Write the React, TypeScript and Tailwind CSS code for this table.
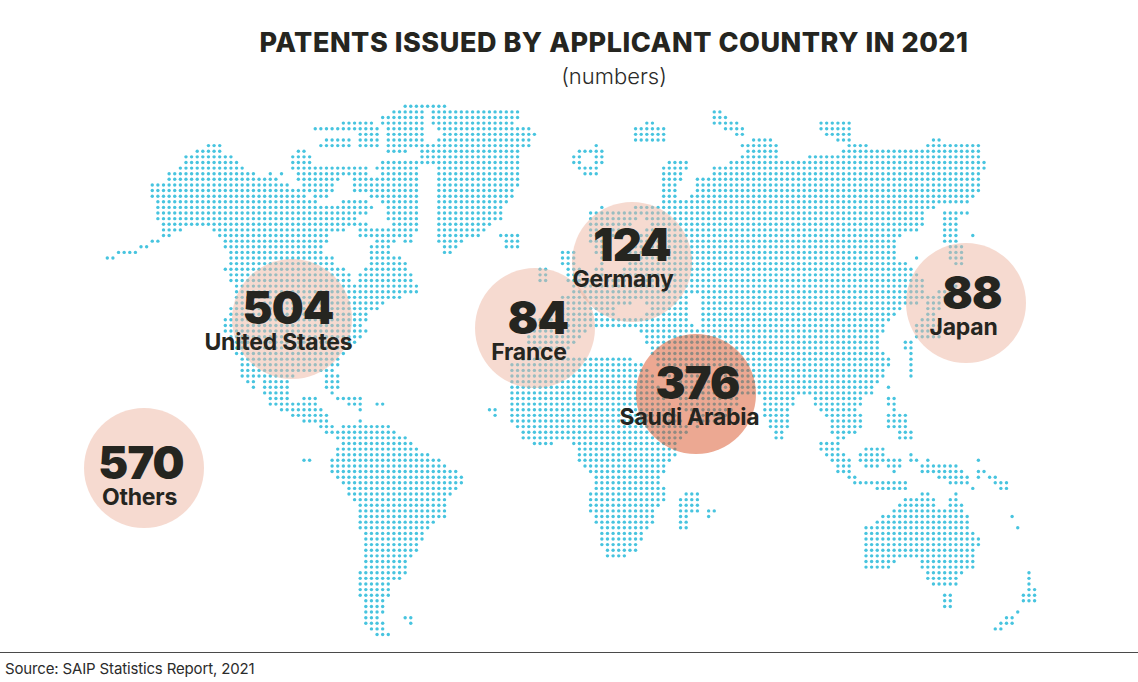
import React from 'react';

type P = [number, number][];

const PITCH = 5.62;
const X0 = 107.3;
const Y0 = 258;

const NA: P = [[150,183],[160,183],[166,178],[170,172],[182,165],[183,155],[200,150],[211,144],[222,144],[223,152],[234,155],[240,164],[250,171],[262,176],[279,178],[289,184],[299,189],[305,195],[311,200],[334,206],[348,211],[355,217],[355,226],[345,231],[332,233],[332,244],[325,246],[325,253],[333,256],[336,262],[342,268],[350,274],[352,283],[356,283],[357,272],[366,268],[366,250],[372,245],[372,240],[365,237],[357,235],[357,222],[368,222],[371,228],[392,227],[401,233],[402,240],[395,242],[390,246],[390,255],[398,254],[405,261],[410,268],[414,278],[418,287],[417,295],[400,298],[386,302],[380,308],[370,313],[366,320],[364,326],[369,331],[360,337],[356,342],[350,347],[349,353],[343,358],[339,364],[337,370],[339,376],[340,385],[337,393],[335,398],[330,397],[327,390],[325,383],[323,375],[295,374],[292,380],[290,388],[289,398],[298,404],[305,397],[316,395],[318,405],[323,410],[327,415],[328,422],[333,427],[336,433],[328,434],[320,429],[315,424],[302,422],[291,417],[280,412],[270,406],[266,399],[262,392],[262,381],[257,376],[254,376],[256,388],[251,390],[246,382],[240,376],[239,358],[234,353],[234,342],[227,336],[223,330],[223,318],[228,312],[229,306],[234,302],[234,290],[231,284],[228,278],[223,270],[226,262],[226,250],[221,245],[221,238],[216,234],[211,230],[204,226],[196,227],[185,228],[181,233],[167,234],[161,229],[161,222],[157,218],[155,213],[155,200],[149,195]];

const ELL: P = [[380,118],[392,111],[406,104],[423,104],[423,150],[412,150],[402,155],[387,155],[384,142],[383,128]];
const BAF: P = [[378,160],[392,157],[404,158],[418,162],[420,175],[421,190],[418,200],[417,215],[416,242],[405,244],[397,237],[390,230],[388,220],[386,206],[376,197],[363,195],[355,192],[350,186],[348,180],[362,178],[378,176],[376,168]];
const SOU: P = [[340,199],[367,199],[374,207],[370,214],[362,215],[345,212],[338,206]];
const MEL: P = [[311,127],[339,127],[339,134],[311,134]];
const MEL2: P = [[326,135],[350,137],[353,150],[326,151],[316,147]];
const DEV: P = [[359,121],[373,121],[380,130],[379,150],[357,150],[355,143]];
const SM1: P = [[341,121],[355,121],[355,131],[341,131]];
const BANKS: P = [[299,149],[309,150],[313,158],[313,166],[335,165],[366,166],[368,172],[364,178],[344,178],[334,182],[332,196],[316,197],[306,195],[301,185],[295,178],[290,167],[291,157]];
const GRL: P = [[425,105],[445,105],[452,110],[487,109],[518,109],[521,117],[516,123],[528,127],[535,135],[530,145],[523,150],[523,167],[518,174],[518,186],[513,191],[513,198],[506,203],[503,210],[503,219],[490,224],[483,231],[478,238],[466,237],[462,245],[456,250],[454,257],[446,257],[441,246],[435,236],[435,190],[439,176],[434,168],[421,166],[417,153],[421,145],[438,141],[440,133],[434,126]];
const ICE: P = [[500,233],[523,233],[523,249],[504,250]];
const SVAL: P = [[575,147],[600,145],[606,158],[600,172],[590,177],[578,172],[572,160]];
const FJL: P = [[630,132],[646,121],[669,127],[663,145],[630,145]];
const NZEM: P = [[712,110],[721,112],[735,120],[745,128],[745,138],[736,138],[724,128],[712,122]];
const SEVZ: P = [[820,122],[852,122],[852,143],[838,143],[828,137],[820,130]];

const EUR: P = [[529,350],[527,335],[529,321],[540,318],[549,318],[552,308],[558,298],[566,293],[578,291],[588,284],[593,276],[596,268],[598,258],[592,250],[588,238],[586,224],[590,211],[600,206],[612,210],[628,210],[640,205],[660,204],[662,190],[662,172],[666,160],[690,158],[692,167],[681,171],[680,200],[689,199],[694,188],[696,178],[710,176],[715,169],[716,161],[725,166],[732,160],[744,153],[739,146],[748,140],[772,139],[779,147],[779,160],[786,160],[806,160],[812,155],[823,155],[843,150],[848,145],[866,145],[869,150],[905,150],[920,150],[926,144],[931,139],[940,139],[958,145],[972,143],[981,146],[981,155],[985,162],[987,169],[981,176],[981,192],[974,198],[969,204],[934,207],[926,214],[923,222],[929,226],[917,232],[905,235],[897,240],[897,258],[908,261],[913,268],[918,273],[924,280],[924,291],[931,297],[918,303],[904,308],[897,313],[892,319],[885,324],[887,330],[880,336],[880,346],[887,352],[890,360],[888,368],[887,375],[883,381],[877,387],[873,393],[866,396],[862,400],[859,408],[863,415],[863,427],[857,432],[849,434],[846,440],[838,444],[834,440],[831,430],[831,422],[825,415],[818,410],[813,404],[810,396],[796,396],[794,406],[790,420],[786,432],[785,442],[779,443],[773,433],[767,422],[762,411],[759,397],[746,395],[733,393],[741,401],[736,410],[722,418],[707,425],[697,428],[690,421],[683,409],[675,396],[667,383],[660,371],[654,360],[650,352],[647,343],[642,332],[625,327],[605,326],[592,328],[582,335],[578,343],[568,349],[552,352]];

const AFR: P = [[507,366],[515,361],[528,357],[545,355],[562,355],[578,357],[592,356],[606,358],[624,358],[640,360],[648,366],[655,378],[662,391],[670,404],[678,416],[684,420],[692,426],[686,436],[680,442],[675,447],[678,453],[673,460],[668,468],[662,474],[662,482],[668,486],[668,503],[655,508],[652,514],[656,519],[650,526],[644,531],[642,540],[639,548],[634,553],[624,559],[602,560],[602,548],[597,540],[597,525],[591,520],[591,512],[586,507],[586,496],[591,490],[591,475],[586,470],[579,463],[574,457],[579,452],[579,445],[570,443],[557,443],[540,445],[530,443],[520,437],[519,428],[514,424],[507,418],[507,386],[511,380],[507,372]];
const MAD: P = [[689,489],[699,489],[699,510],[692,515],[685,531],[675,531],[675,504]];
const UK: P = [[562,251],[572,248],[577,257],[581,270],[583,282],[573,287],[563,285],[565,272],[560,262]];
const IRE: P = [[535,266],[550,266],[550,283],[535,283]];

const SAK: P = [[941,209],[969,209],[969,216],[958,218],[958,243],[941,243]];
const HOK: P = [[946,245],[962,245],[962,267],[953,267],[946,256]];
const HON: P = [[950,283],[958,284],[958,290],[950,295],[942,301],[939,310],[934,318],[940,325],[942,338],[930,339],[916,339],[911,331],[918,322],[924,315],[926,305],[932,295],[942,288]];
const KYU: P = [[900,339],[912,339],[912,355],[900,352]];
const TAI: P = [[908,358],[915,358],[915,378],[908,378]];
const PHIL: P = [[886,398],[896,398],[900,412],[908,416],[913,440],[902,443],[895,432],[887,426],[889,410]];
const BOR: P = [[869,444],[885,444],[885,462],[878,471],[865,471],[857,462],[859,451]];
const SUM: P = [[819,439],[830,439],[846,455],[855,470],[851,478],[840,476],[830,462],[821,450]];
const JAVA: P = [[852,477],[885,478],[907,483],[907,490],[885,490],[852,485]];
const SUL: P = [[886,455],[902,455],[902,471],[892,473],[886,468]];
const NG: P = [[919,466],[945,461],[961,467],[969,474],[973,489],[962,485],[945,482],[931,474],[919,472]];
const AUS: P = [[864,528],[874,521],[880,516],[891,512],[891,506],[903,504],[903,495],[920,495],[921,489],[929,489],[935,497],[938,508],[947,510],[950,500],[953,492],[958,492],[962,503],[963,512],[969,518],[969,527],[974,531],[980,540],[980,549],[974,553],[974,570],[968,571],[962,577],[958,583],[951,588],[937,589],[932,583],[926,577],[920,570],[920,563],[914,559],[901,561],[889,563],[889,568],[873,571],[864,567]];
const TAS: P = [[940,594],[953,594],[953,611],[940,611]];
const NZN: P = [[1025,571],[1032,571],[1032,587],[1037,589],[1037,600],[1027,605],[1020,600],[1025,590]];
const NZS: P = [[1021,603],[1015,611],[1004,618],[993,626],[994,634],[1004,631],[1013,623],[1020,615],[1023,606]];

const SA: P = [[345,424],[365,423],[385,422],[393,426],[396,435],[410,439],[421,449],[437,459],[448,465],[461,471],[462,488],[454,493],[449,500],[449,515],[443,520],[433,525],[428,532],[421,545],[414,555],[408,562],[406,576],[395,581],[389,588],[389,600],[381,605],[388,610],[381,618],[384,625],[388,630],[394,637],[380,639],[367,632],[365,620],[365,605],[360,596],[357,586],[360,570],[362,555],[362,530],[357,525],[360,505],[347,496],[342,482],[330,471],[328,460],[336,450],[340,440],[330,436],[330,430]];
const CUBA: P = [[334,395],[346,394],[356,396],[366,401],[363,406],[345,404],[334,400]];

const LAND: P[] = [NA, ELL, BAF, SOU, MEL, MEL2, DEV, SM1, BANKS, GRL, ICE, SVAL, FJL, NZEM, SEVZ, EUR, AFR, MAD, UK, IRE, SAK, HOK, HON, KYU, TAI, PHIL, BOR, SUM, JAVA, SUL, NG, AUS, TAS, NZN, NZS, SA, CUBA];

const WATER: P[] = [
  [[584,155],[595,155],[595,166],[584,166]],
  [[578,343],[590,330],[625,329],[642,333],[647,345],[649,356],[630,357],[600,356],[585,352]],
  [[612,305],[640,302],[650,309],[642,318],[620,318]],
  [[688,293],[698,293],[703,313],[697,330],[689,320]],
  [[606,256],[612,242],[624,229],[640,218],[650,222],[638,236],[630,250],[627,265],[620,276],[606,276]],
  [[700,372],[713,367],[724,378],[720,386],[708,381]],
];

const EXTRA: [number, number][] = [
  [107,258],[113,258],[118,252],[124,252],[130,252],[135,252],[141,247],[147,247],[152,241],[158,241],[163,235],[169,235],
  [270,174],[280,174],
  [302,458],[308,458],[302,463],
  [403,619],[410,619],[410,625],
  [487,408],[493,408],[493,413],
  [375,403],[382,403],[358,408],[358,419],
  [710,513],[717,513],[710,519],
  [1012,519],[1017,525],
  [978,463],[978,469],[983,469],[978,475],[990,475],[995,475],[995,480],[1001,480],[1007,480],[1000,486],[1007,486],
  [893,480],[905,480],[912,452],[917,458],[928,458],[912,463],
  [890,386],[975,235],[917,258],
  [698,180],[698,186],[715,169],
];

function inside(x: number, y: number, poly: P) {
  let c = false;
  for (let i = 0, j = poly.length - 1; i < poly.length; j = i++) {
    const [xi, yi] = poly[i];
    const [xj, yj] = poly[j];
    if (yi > y !== yj > y && x < ((xj - xi) * (y - yi)) / (yj - yi) + xi) c = !c;
  }
  return c;
}

function buildDots() {
  const out: [number, number][] = [];
  const seen = new Set<string>();
  for (let j = -28; j <= 68; j++) {
    const y = Y0 + PITCH * j;
    for (let i = 0; i <= 166; i++) {
      const x = X0 + PITCH * i;
      if (LAND.some((p) => inside(x, y, p)) && !WATER.some((p) => inside(x, y, p))) {
        out.push([x, y]);
        seen.add(i + ',' + j);
      }
    }
  }
  for (const [ex, ey] of EXTRA) {
    const i = Math.round((ex - X0) / PITCH);
    const j = Math.round((ey - Y0) / PITCH);
    const k = i + ',' + j;
    if (!seen.has(k)) {
      seen.add(k);
      out.push([X0 + PITCH * i, Y0 + PITCH * j]);
    }
  }
  return out;
}

const DOTS = buildDots();

const MAP_TOP = 95;

// cx/cy: bubble centre; nx: number centre; ny: number cap top; lx: label centre
const BUBBLES = [
  { cx: 292, cy: 319, dark: false, num: '504', nx: 288, ny: 292, label: 'United States', lx: 278.5 },
  { cx: 143.5, cy: 468, dark: false, num: '570', nx: 141, ny: 447, label: 'Others', lx: 139.5 },
  { cx: 632, cy: 262, dark: false, num: '124', nx: 632, ny: 229, label: 'Germany', lx: 623 },
  { cx: 535, cy: 328, dark: false, num: '84', nx: 538, ny: 302, label: 'France', lx: 529 },
  { cx: 696, cy: 394, dark: true, num: '376', nx: 697.5, ny: 367, label: 'Saudi Arabia', lx: 689.5 },
  { cx: 966, cy: 303, dark: false, num: '88', nx: 972, ny: 277, label: 'Japan', lx: 963.5 },
];

export default function App() {
  return (
    <div className="w-[1138px] h-[682px] bg-white text-[#252520] font-['Inter',sans-serif] overflow-hidden">
      <header className="h-[95px] pl-[90px] pt-[29px] flex flex-col items-center">
        <h1 className="text-[27px] leading-none font-extrabold tracking-[0.02em] whitespace-nowrap">
          PATENTS ISSUED BY APPLICANT COUNTRY IN 2021
        </h1>
        <p className="mt-[9px] text-[22px] leading-none font-light text-[#2a2a28]">(numbers)</p>
      </header>

      <main className="relative h-[557px]">
        <svg width="1138" height="557" viewBox={`0 ${MAP_TOP} 1138 557`} className="block">
          <g fill="#47c4df">
            {DOTS.map(([x, y], k) => (
              <circle key={k} cx={x.toFixed(2)} cy={y.toFixed(2)} r="1.7" />
            ))}
          </g>
        </svg>

        {BUBBLES.map((b) => (
          <div
            key={b.label + 'c'}
            className={
              'absolute w-[120px] h-[120px] rounded-full ' +
              (b.dark ? 'bg-[rgba(217,82,38,0.5)]' : 'bg-[rgba(237,181,161,0.5)]')
            }
            style={{ left: b.cx - 60, top: b.cy - MAP_TOP - 60 }}
          />
        ))}

        {BUBBLES.map((b) => (
          <div
            key={b.label + 't'}
            className="absolute -translate-x-1/2 flex flex-col items-center gap-[5px] whitespace-nowrap"
            style={{ left: b.lx, top: b.ny - MAP_TOP - 2 }}
          >
            <span
              className="relative block text-[45px] leading-[36px] font-black tracking-[-0.02em]"
              style={{ left: b.nx - b.lx }}
            >
              {b.num}
            </span>
            <span className="block text-[23px] leading-none font-bold tracking-[-0.01em]">{b.label}</span>
          </div>
        ))}
      </main>

      <footer>
        <div className="border-t border-[#4a4a4a]" />
        <p className="mt-[8px] pl-[5px] text-[15px] leading-none text-[#2b2b2b] tracking-[-0.01em]">
          Source: SAIP Statistics Report, 2021
        </p>
      </footer>
    </div>
  );
}
